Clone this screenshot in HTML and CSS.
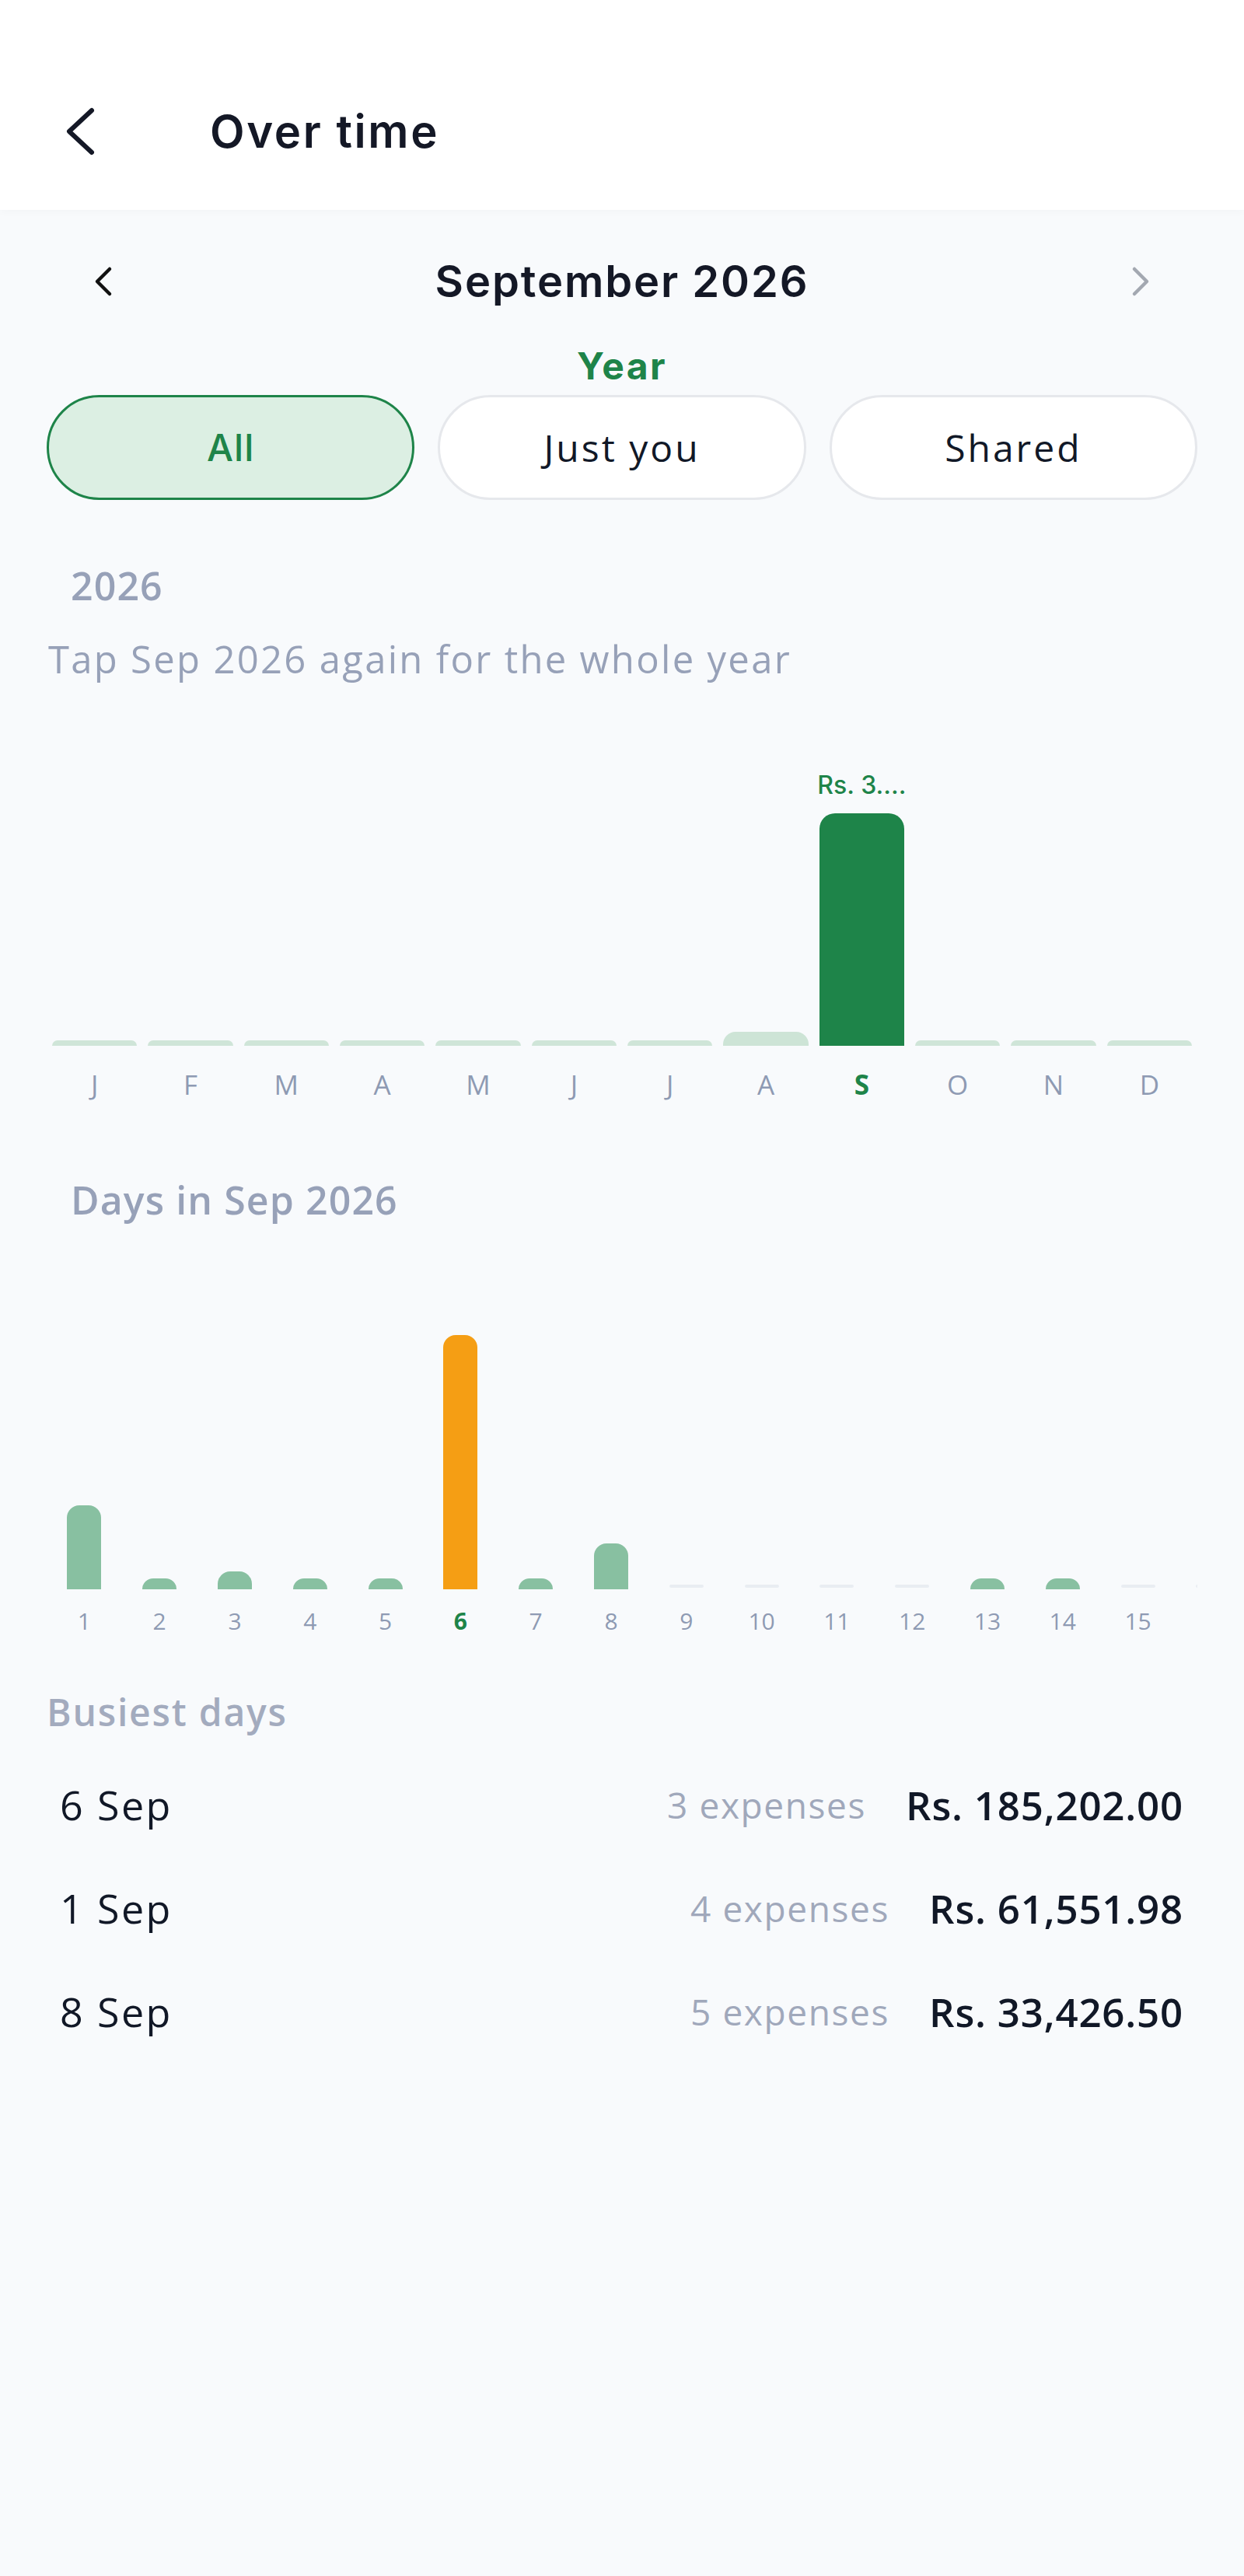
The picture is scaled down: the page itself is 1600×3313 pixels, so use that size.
FILE: index.html
```html
<!DOCTYPE html>
<html lang="en">
<head>
<meta charset="utf-8">
<title>Over time</title>
<link rel="stylesheet" href="styles.css">
</head>
<body>
<header class="topbar">
  <button class="back" aria-label="Back">
    <svg width="40" height="64" viewBox="0 0 40 64"><polyline points="34,5 5,32 34,59" fill="none" stroke="#141826" stroke-width="6" stroke-linecap="round" stroke-linejoin="round"/></svg>
  </button>
  <h1 class="title">Over time</h1>
</header>

<main class="content">
  <div class="monthnav">
    <span class="nav-btn">
      <svg width="26" height="40" viewBox="0 0 26 40"><polyline points="21,4 5,20 21,36" fill="none" stroke="#111" stroke-width="4.5" stroke-linecap="round" stroke-linejoin="round"/></svg>
    </span>
    <span class="month-title">September 2026</span>
    <span class="nav-btn">
      <svg width="26" height="40" viewBox="0 0 26 40"><polyline points="5,4 21,20 5,36" fill="none" stroke="#a3a8b1" stroke-width="4.5" stroke-linecap="round" stroke-linejoin="round"/></svg>
    </span>
  </div>

  <div class="period">Year</div>

  <div class="pills">
    <div class="pill pill-active">All</div>
    <div class="pill">Just you</div>
    <div class="pill">Shared</div>
  </div>

  <div class="section-title year-title">2026</div>
  <div class="hint">Tap Sep 2026 again for the whole year</div>

  <div class="month-chart">
    <div class="mcol"><div class="mbar-area"><div class="mbar flat" style="height:7px"></div></div><div class="mlabel">J</div></div>
    <div class="mcol"><div class="mbar-area"><div class="mbar flat" style="height:7px"></div></div><div class="mlabel">F</div></div>
    <div class="mcol"><div class="mbar-area"><div class="mbar flat" style="height:7px"></div></div><div class="mlabel">M</div></div>
    <div class="mcol"><div class="mbar-area"><div class="mbar flat" style="height:7px"></div></div><div class="mlabel">A</div></div>
    <div class="mcol"><div class="mbar-area"><div class="mbar flat" style="height:7px"></div></div><div class="mlabel">M</div></div>
    <div class="mcol"><div class="mbar-area"><div class="mbar flat" style="height:7px"></div></div><div class="mlabel">J</div></div>
    <div class="mcol"><div class="mbar-area"><div class="mbar flat" style="height:7px"></div></div><div class="mlabel">J</div></div>
    <div class="mcol"><div class="mbar-area"><div class="mbar soft" style="height:18px"></div></div><div class="mlabel">A</div></div>
    <div class="mcol"><div class="mbar-area"><div class="mvalue">Rs. 3....</div><div class="mbar active" style="height:299px"></div></div><div class="mlabel mlabel-active">S</div></div>
    <div class="mcol"><div class="mbar-area"><div class="mbar flat" style="height:7px"></div></div><div class="mlabel">O</div></div>
    <div class="mcol"><div class="mbar-area"><div class="mbar flat" style="height:7px"></div></div><div class="mlabel">N</div></div>
    <div class="mcol"><div class="mbar-area"><div class="mbar flat" style="height:7px"></div></div><div class="mlabel">D</div></div>
  </div>

  <div class="section-title days-title">Days in Sep 2026</div>

  <div class="day-chart">
    <div class="day-track">
      <div class="dcol"><div class="dbar-area"><div class="dbar" style="height:108px"></div></div><div class="dlabel">1</div></div>
      <div class="dcol"><div class="dbar-area"><div class="dbar" style="height:14px"></div></div><div class="dlabel">2</div></div>
      <div class="dcol"><div class="dbar-area"><div class="dbar" style="height:23px"></div></div><div class="dlabel">3</div></div>
      <div class="dcol"><div class="dbar-area"><div class="dbar" style="height:14px"></div></div><div class="dlabel">4</div></div>
      <div class="dcol"><div class="dbar-area"><div class="dbar" style="height:14px"></div></div><div class="dlabel">5</div></div>
      <div class="dcol"><div class="dbar-area"><div class="dbar dbar-peak" style="height:327px"></div></div><div class="dlabel dlabel-active">6</div></div>
      <div class="dcol"><div class="dbar-area"><div class="dbar" style="height:14px"></div></div><div class="dlabel">7</div></div>
      <div class="dcol"><div class="dbar-area"><div class="dbar" style="height:59px"></div></div><div class="dlabel">8</div></div>
      <div class="dcol"><div class="dbar-area"><div class="dbar dbar-zero"></div></div><div class="dlabel">9</div></div>
      <div class="dcol"><div class="dbar-area"><div class="dbar dbar-zero"></div></div><div class="dlabel">10</div></div>
      <div class="dcol"><div class="dbar-area"><div class="dbar dbar-zero"></div></div><div class="dlabel">11</div></div>
      <div class="dcol"><div class="dbar-area"><div class="dbar dbar-zero"></div></div><div class="dlabel">12</div></div>
      <div class="dcol"><div class="dbar-area"><div class="dbar" style="height:14px"></div></div><div class="dlabel">13</div></div>
      <div class="dcol"><div class="dbar-area"><div class="dbar" style="height:14px"></div></div><div class="dlabel">14</div></div>
      <div class="dcol"><div class="dbar-area"><div class="dbar dbar-zero"></div></div><div class="dlabel">15</div></div>
      <div class="dcol"><div class="dbar-area"><div class="dbar dbar-zero"></div></div><div class="dlabel"></div></div>
    </div>
  </div>

  <div class="busiest-title">Busiest days</div>

  <ul class="busiest">
    <li class="brow"><span class="bdate">6 Sep</span><span class="bcount">3 expenses</span><span class="bamount">Rs. 185,202.00</span></li>
    <li class="brow"><span class="bdate">1 Sep</span><span class="bcount">4 expenses</span><span class="bamount">Rs. 61,551.98</span></li>
    <li class="brow"><span class="bdate">8 Sep</span><span class="bcount">5 expenses</span><span class="bamount">Rs. 33,426.50</span></li>
  </ul>
</main>
</body>
</html>
```

FILE: styles.css
```css
* { box-sizing: border-box; }

html, body {
  margin: 0;
  padding: 0;
}

body {
  background: #f8fafc;
  font-family: "Open Sans", "Noto Sans", sans-serif;
  color: #111827;
  min-height: 3313px;
}

.topbar {
  height: 270px;
  background: #ffffff;
  display: flex;
  align-items: center;
  padding-left: 84px;
  padding-top: 68px;
  box-shadow: 0 3px 10px rgba(15, 23, 42, 0.025);
  position: relative;
}

.back {
  border: 0;
  background: none;
  padding: 0;
  width: 40px;
  height: 64px;
  display: flex;
}

.title {
  margin: 0 0 0 146px;
  font-family: "Inter", sans-serif;
  font-weight: 600;
  font-size: 58px;
  line-height: 70px;
  color: #141826;
  letter-spacing: 2.6px;
}

.content {
  padding: 0 60px;
}

.monthnav {
  margin-top: 42px;
  height: 100px;
  padding: 0 60px;
  display: flex;
  align-items: center;
  justify-content: space-between;
}

.nav-btn {
  width: 26px;
  height: 40px;
  display: flex;
}

.month-title {
  font-family: "Inter", sans-serif;
  font-weight: 600;
  font-size: 56px;
  color: #141826;
  letter-spacing: 1.9px;
}

.period {
  margin-top: 31px;
  text-align: center;
  font-family: "Inter", sans-serif;
  font-weight: 700;
  font-size: 48px;
  line-height: 56px;
  letter-spacing: 2.4px;
  color: #1e8449;
}

.pills {
  margin-top: 9px;
  display: grid;
  grid-template-columns: repeat(3, 1fr);
  gap: 30px;
}

.pill {
  height: 135px;
  border-radius: 68px;
  border: 3px solid #e6e8ec;
  background: #ffffff;
  display: flex;
  align-items: center;
  justify-content: center;
  font-size: 48px;
  letter-spacing: 3px;
  color: #111827;
}

.pill-active {
  background: #dcefe3;
  border-color: #1e8449;
  color: #1e8449;
  font-family: "Inter", sans-serif;
  font-weight: 500;
  font-size: 48px;
  letter-spacing: 1px;
}

.section-title {
  font-weight: 600;
  font-size: 50px;
  line-height: 60px;
  letter-spacing: 1.1px;
  color: #97a1b8;
  padding-left: 31px;
}

.year-title {
  margin-top: 80px;
}

.hint {
  margin-top: 34px;
  padding-left: 2px;
  font-size: 49px;
  line-height: 60px;
  letter-spacing: 2.3px;
  color: #97a1b8;
}

.month-chart {
  margin-top: 68px;
  display: grid;
  grid-template-columns: repeat(12, 1fr);
}

.mcol {
  display: flex;
  flex-direction: column;
  align-items: stretch;
}

.mbar-area {
  height: 400px;
  display: flex;
  flex-direction: column;
  justify-content: flex-end;
  align-items: stretch;
  padding: 0 7px;
}

.mbar {
  border-radius: 12px 12px 0 0;
  background: #cfe5d8;
}

.mbar.soft {
  border-radius: 16px 16px 0 0;
  background: #cde4d6;
}

.mbar.active {
  background: #1e8449;
  border-radius: 20px 20px 0 0;
}

.mvalue {
  font-family: "Inter", sans-serif;
  font-weight: 500;
  font-size: 32px;
  line-height: 40px;
  color: #1e8449;
  text-align: center;
  margin: 0 -10px 16px;
  white-space: nowrap;
}

.mlabel {
  margin-top: 28px;
  text-align: center;
  font-size: 35px;
  line-height: 44px;
  font-weight: 400;
  color: #8e9ab3;
}

.mlabel-active {
  color: #1e8449;
  font-weight: 700;
}

.days-title {
  margin-top: 96px;
}

.day-chart {
  overflow: hidden;
}

.day-track {
  display: flex;
}

.dcol {
  flex: 0 0 96.8px;
  display: flex;
  flex-direction: column;
  align-items: center;
}

.dbar-area {
  height: 471px;
  display: flex;
  align-items: flex-end;
}

.dbar {
  width: 44px;
  background: #88c0a1;
  border-radius: 16px 16px 0 0;
}

.dbar-peak {
  background: #f59e14;
}

.dbar-zero {
  height: 4px;
  width: 44px;
  margin-bottom: 2px;
  background: #e9edf2;
  border-radius: 2px;
}

.dlabel {
  margin-top: 21px;
  min-height: 40px;
  font-size: 30px;
  line-height: 40px;
  color: #8e9ab3;
  font-weight: 400;
}

.dlabel-active {
  color: #1e8449;
  font-weight: 700;
}

.busiest-title {
  margin-top: 67px;
  font-weight: 600;
  font-size: 48px;
  line-height: 60px;
  letter-spacing: 1.8px;
  color: #a3abbe;
}

.busiest {
  list-style: none;
  margin: 22px 0 0;
  padding: 0 18px 0 17px;
}

.brow {
  height: 133px;
  display: flex;
  align-items: center;
}

.bdate {
  flex: 1;
  font-size: 52px;
  letter-spacing: 2.4px;
  color: #111827;
}

.bcount {
  font-size: 46px;
  letter-spacing: 1.6px;
  color: #a0a8bb;
  margin-right: 51px;
}

.bamount {
  font-weight: 600;
  font-size: 51px;
  letter-spacing: 0.8px;
  color: #111827;
}
```
